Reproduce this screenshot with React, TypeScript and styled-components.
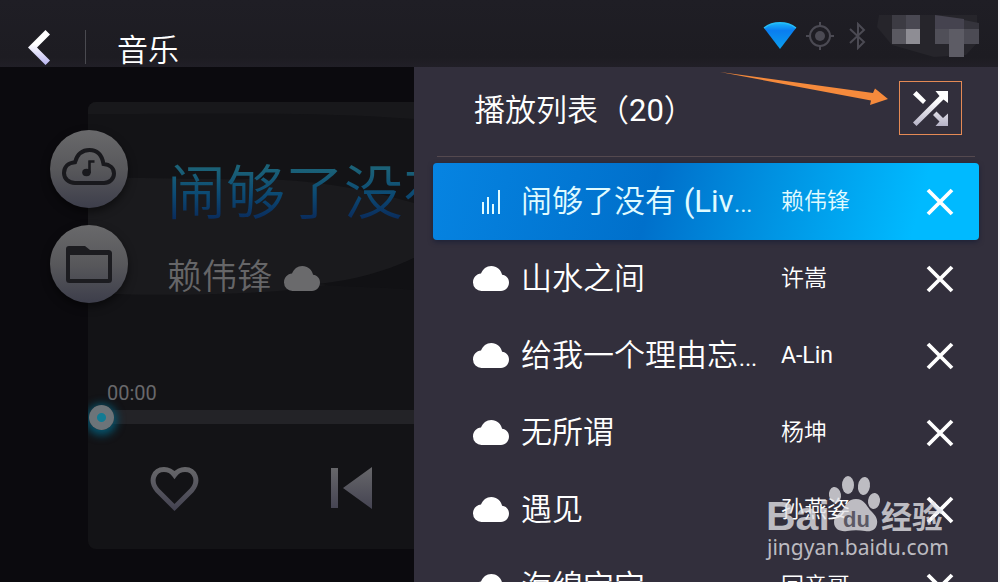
import React from "react";
import styled, { createGlobalStyle, css } from "styled-components";

const GlobalStyle = createGlobalStyle`
  * { box-sizing: border-box; }
  body { margin: 0; background: #f4f4f6; }
  button { background: none; border: 0; padding: 0; margin: 0; color: inherit; font: inherit; cursor: pointer; }
  svg { display: block; flex: none; }
`;

const Screen = styled.div`
  position: relative;
  display: flex;
  flex-direction: column;
  height: 100vh;
  margin-right: 2px;
  overflow: hidden;
  background: #0b0a0e;
  color: #fff;
  font-family: Roboto, "Noto Sans CJK SC", sans-serif;
  font-weight: 350;
`;

const Latin = styled.span`
  font-weight: 400;
`;

const TopBar = styled.header`
  flex: none;
  display: flex;
  justify-content: space-between;
  height: 67px;
  padding: 13px 18px 0 28px;
  background: linear-gradient(#1f1e25, #1d1c22 85%, #211f27);
`;

const TitleGroup = styled.div`
  display: flex;
  align-items: center;
  padding-top: 14px;
`;

const PageTitle = styled.h1`
  margin: 0 0 0 31px;
  padding-top: 8px;
  font-size: 31px;
  font-weight: 350;
  line-height: 40px;
`;

const Separator = styled.span`
  width: 1px;
  height: 34px;
  margin-left: 35px;
  background: #4a4a50;
`;

const StatusIcons = styled.div`
  display: flex;
  align-items: center;
  height: 45px;
`;

const Gap = styled.span<{ $w: number }>`
  width: ${(p) => p.$w}px;
`;

const Content = styled.div`
  flex: 1;
  min-height: 0;
  display: grid;
  grid-template-columns: minmax(0, 414fr) minmax(0, 584fr);
`;

const Stage = styled.main`
  position: relative;
  overflow: hidden;
  padding: 35px 0 33px 88px;
`;

const Card = styled.section`
  position: relative;
  height: 100%;
  border-radius: 8px 0 0 8px;
  overflow: hidden;
  background: #131316;
`;

const Waves = styled.svg`
  position: absolute;
  inset: 0;
`;

const CardBody = styled.div`
  position: relative;
  padding-top: 56px;
`;

const SongTitle = styled.h2`
  margin: 0;
  padding-left: 79px;
  font-size: 59px;
  font-weight: 350;
  line-height: 72px;
  white-space: nowrap;
  color: transparent;
  background: linear-gradient(#1b6177 15%, #0c4a73 50%, #0a2c5c 85%);
  background-clip: text;
  -webkit-background-clip: text;
`;

const Singer = styled.p`
  display: flex;
  align-items: center;
  gap: 12px;
  margin: 26px 0 0;
  padding-left: 79px;
  font-size: 35px;
  line-height: 44px;
  color: #666668;
`;

const Elapsed = styled.div`
  margin-top: 81px;
  padding-left: 19px;
  font-size: 20px;
  font-weight: 400;
  line-height: 24px;
  color: #68686b;
`;

const Seek = styled.input`
  display: block;
  appearance: none;
  width: 100%;
  height: 24px;
  margin: 0;
  padding: 0 0 0 1px;
  background: linear-gradient(#232327, #232327) 16px 5px / 100% 14px no-repeat;
  &::-webkit-slider-thumb {
    appearance: none;
    width: 25px;
    height: 25px;
    border-radius: 50%;
    background: radial-gradient(circle, #127b93 0 4px, #6c7479 5px);
    box-shadow: 0 2px 9px 3px #06556e;
  }
`;

const Transport = styled.div`
  display: flex;
  align-items: flex-start;
  gap: 131px;
  padding: 38px 0 0 62px;
`;

const Sources = styled.nav`
  position: absolute;
  top: 63px;
  left: 50px;
  display: flex;
  flex-direction: column;
  gap: 17px;
`;

const RoundButton = styled.button`
  display: grid;
  place-items: center;
  width: 78px;
  height: 78px;
  border-radius: 50%;
  background: linear-gradient(#69696b, #58585b 50%, #3d3e4b);
  box-shadow: 0 4px 8px rgba(0, 0, 0, 0.5);
`;

const Panel = styled.aside`
  position: relative;
  min-width: 0;
  overflow: hidden;
  padding: 0 19px;
  background: #322f3c;
`;

const PanelHead = styled.div`
  display: flex;
  justify-content: space-between;
  height: 90px;
  margin: 0 4px 6px;
  padding: 14px 13px 0 37px;
  border-bottom: 1px solid #54494f;
`;

const PanelTitle = styled.h2`
  margin: 0;
  font-size: 31px;
  font-weight: 350;
  line-height: 60px;
`;

const ShuffleButton = styled.button`
  display: grid;
  place-items: center;
  width: 63px;
  height: 54px;
  border: 1px solid #e58a55;
`;

const Pointer = styled.svg`
  position: absolute;
  top: 4px;
  right: 110px;
`;

const List = styled.ul`
  list-style: none;
  margin: 0;
  padding: 0;
`;

const Row = styled.li<{ $active?: boolean }>`
  display: flex;
  align-items: center;
  height: 77px;
  padding: 0 25px 0 40px;
  border-radius: 4px;
  ${(p) =>
    p.$active &&
    css`
      color: #e0fbff;
      background: linear-gradient(105deg, #0684e2, #0070cb 40%, #0090e0 60%, #00baff 88%);
      box-shadow: 0 2px 5px rgba(10, 20, 50, 0.5);
    `}
`;

const IconSlot = styled.span`
  flex: none;
  width: 36px;
  display: grid;
  place-items: center;
`;

const Track = styled.span`
  flex: 238;
  min-width: 0;
  margin: 0 22px 0 12px;
  overflow: hidden;
  text-overflow: ellipsis;
  white-space: nowrap;
  font-size: 31px;
  line-height: 44px;
`;

const Artist = styled.span`
  flex: 145;
  min-width: 0;
  font-size: 23px;
  line-height: 32px;
  white-space: nowrap;
`;

const Watermark = styled.div`
  position: absolute;
  right: 53px;
  bottom: 22px;
  width: 178px;
  color: rgba(228, 228, 232, 0.78);
  pointer-events: none;
`;

const WatermarkUrl = styled.span`
  display: block;
  font-family: "Noto Sans", sans-serif;
  font-size: 21px;
  font-weight: 400;
  line-height: 26px;
  white-space: nowrap;
`;

const Cloud = ({ color = "#fff" }: { color?: string }) => (
  <svg width="36" height="25" viewBox="0 0 36 25" fill={color}>
    <path d="M8.5 25A8.5 8.5 0 0 1 0 16.500C0 11.500 3.500 8 8 7.600 9.800 3 13.500 0 18.300 0c5.400 0 9.700 3.700 10.800 8.700C33 9 36 12.200 36 16.500 36 21.300 32.500 25 28 25z" />
  </svg>
);

const Bars = () => (
  <svg width="18" height="24" viewBox="0 0 18 24" fill="currentColor">
    <path d="M0 12h2v12H0zM5 7h2v17H5zM10 14h2v10h-2zM16 0h2v24h-2z" />
  </svg>
);

const Cross = () => (
  <svg width="28" height="28" viewBox="0 0 28 28" stroke="#fff" strokeWidth="3.8">
    <path d="M2 2l24 24M26 2L2 26" />
  </svg>
);

const BackIcon = () => (
  <svg width="22" height="35" viewBox="0 0 22 35">
    <defs>
      <linearGradient id="back" x1="0" y1="0" x2="0" y2="1">
        <stop offset="0.4" stopColor="#fff" />
        <stop offset="1" stopColor="#b9b5f0" />
      </linearGradient>
    </defs>
    <path d="M17.500 0L22 4.500 9 17.500 22 30.500 17.500 35 0 17.500z" fill="url(#back)" />
  </svg>
);

const WifiIcon = () => (
  <svg width="34" height="28" viewBox="0 0 34 28">
    <defs>
      <linearGradient id="wifi" x1="0" y1="0" x2="0" y2="1">
        <stop offset="0" stopColor="#1bb6f8" />
        <stop offset="0.3" stopColor="#0a7df0" />
        <stop offset="1" stopColor="#0aa0ee" />
      </linearGradient>
    </defs>
    <path d="M1 6C10-1 24-1 33 6L17 27z" fill="url(#wifi)" />
    <path d="M1 6C10-1 24-1 33 6" fill="none" stroke="#25bdf7" strokeWidth="1.500" />
  </svg>
);

const GpsIcon = () => (
  <svg width="28" height="28" viewBox="0 0 28 28" fill="none" stroke="#4b4a53" strokeWidth="2">
    <circle cx="14" cy="14" r="10" />
    <circle cx="14" cy="14" r="5" fill="#4b4a53" stroke="none" />
    <path d="M14 0v5M14 23v5M0 14h5M23 14h5" />
  </svg>
);

const BluetoothIcon = () => (
  <svg width="17" height="28" viewBox="0 0 17 28" fill="none" stroke="#4b4a53" strokeWidth="2">
    <path d="M1 7l14 13-6 6V2l6 6L1 21" />
  </svg>
);

const Mosaic = () => (
  <svg width="103" height="45" viewBox="0 0 103 45">
    <path d="M2 2h98v28L89 42l-32 2-42-12L0 14z" fill="#26252b" />
    <path d="M15 2h14v14H15z" fill="#3c3b43" />
    <path d="M29 2h14v14H29z" fill="#494852" />
    <path d="M15 16h14v15H15z" fill="#5a5961" />
    <path d="M29 16h14v15H29z" fill="#8e8d94" />
    <path d="M58 2l29 4v10H58z" fill="#45434f" />
    <path d="M58 16h14v15H58z" fill="#504f58" />
    <path d="M72 16h15v28H72z" fill="#5d5c65" />
    <path d="M87 7l15 3v6H87z" fill="#35343c" />
    <path d="M87 16h15v15H87z" fill="#4c4b54" />
  </svg>
);

const ShuffleIcon = () => (
  <svg width="36" height="36" viewBox="0 0 36 36">
    <defs>
      <linearGradient id="shuffle" x1="0" y1="0" x2="0" y2="36" gradientUnits="userSpaceOnUse">
        <stop offset="0.300" stopColor="#fff" />
        <stop offset="1" stopColor="#b5b2c6" />
      </linearGradient>
    </defs>
    <g fill="url(#shuffle)">
      <path d="M0 32.500L26.500 6 22.500 1H35v12l-4.500-3.500L3.500 36z" />
      <path d="M3.500 1L13 10.500 10 14 0 4.500z" />
      <path d="M23.500 21.500l6.500 6.500 5-4.500V36H22.500l4-4.500-6.500-6.500z" />
    </g>
  </svg>
);

const CloudMusicIcon = () => (
  <svg width="54" height="42" viewBox="0 0 54 42" fill="none" stroke="#19191d" strokeWidth="4">
    <path d="M13 35C6.500 35 2 30.500 2 25c0-6 4.300-10.300 11-10.800C15 7 20 2 27.500 2S40 7 41.500 16C48 16.500 52 20.300 52 25.500 52 31 47.500 35 42 35z" />
    <ellipse cx="24.500" cy="24.500" rx="4.300" ry="3.700" fill="#19191d" stroke="none" />
    <path d="M27.500 25V12.500M26.500 13.500h6" strokeWidth="2.600" />
  </svg>
);

const FolderIcon = () => (
  <svg width="46" height="37" viewBox="0 0 46 37">
    <path
      fillRule="evenodd"
      fill="#1c1c20"
      d="M3 0h16l5 4h18.500Q46 4 46 7.500V33.500Q46 37 42.500 37H3.500Q0 37 0 33.500V3Q0 0 3 0zM4 9v24h38V9z"
    />
  </svg>
);

const HeartIcon = () => (
  <svg width="50" height="45" viewBox="0 0 50 45">
    <defs>
      <linearGradient id="metal" x1="0" y1="0" x2="0" y2="45" gradientUnits="userSpaceOnUse">
        <stop offset="0" stopColor="#67676a" />
        <stop offset="1" stopColor="#424150" />
      </linearGradient>
    </defs>
    <path
      d="M24.500 40.500L7.500 23.500C-1 14 4 2.500 14 2.500c5 0 8 2 10.500 5.500C27 4.500 30 2.500 35 2.500c10 0 15 11.500 6.500 21z"
      fill="none"
      stroke="url(#metal)"
      strokeWidth="5"
    />
  </svg>
);

const PreviousIcon = () => (
  <svg width="41" height="42" viewBox="0 0 41 42">
    <path d="M0 1h7v40H0zM41 0v42L12 21z" fill="url(#metal)" />
  </svg>
);

const BaiduLogo = () => (
  <svg width="178" height="60" viewBox="0 0 178 60" fill="currentColor" role="img" aria-label="Baidu 经验">
    <text x="-1" y="56" fontSize="41" fontWeight="700" fontFamily='"Liberation Sans", sans-serif'>
      Bai
    </text>
    <ellipse cx="68" cy="21" rx="6" ry="8" transform="rotate(-10 68 21)" />
    <ellipse cx="81" cy="11" rx="6" ry="9" />
    <ellipse cx="97" cy="12" rx="6" ry="9" transform="rotate(8 97 12)" />
    <ellipse cx="107" cy="27" rx="6" ry="8" transform="rotate(8 107 27)" />
    <path d="M89 25c8 0 10 6 14 11 5 5 8 8 7 14-1 6-6 8-12 7-6-1-12-1-18 0-7 1-13-2-13-9 0-6 5-8 9-13 3-4 5-10 13-10z" />
    <text x="76" y="53" fontSize="22" fontWeight="700" fontFamily='"Liberation Sans", sans-serif' fill="#5b5964">
      du
    </text>
    <text x="114" y="54" fontSize="31" fontWeight="700" fontFamily='"Noto Sans CJK SC", sans-serif'>
      经验
    </text>
  </svg>
);

type Song = { title: string; suffix?: string; artist: string; playing?: boolean };

const tracks: Song[] = [
  { title: "闹够了没有", suffix: " (Live)", artist: "赖伟锋", playing: true },
  { title: "山水之间", artist: "许嵩" },
  { title: "给我一个理由忘记", artist: "A-Lin" },
  { title: "无所谓", artist: "杨坤" },
  { title: "遇见", artist: "孙燕姿" },
  { title: "海绵宝宝", artist: "回音哥" },
];

const isLatin = (text: string) => /^[\x20-\x7e]+$/.test(text);

export default function App() {
  return (
    <Screen>
      <GlobalStyle />
      <TopBar>
        <TitleGroup>
          <button aria-label="返回"><BackIcon /></button>
          <Separator />
          <PageTitle>音乐</PageTitle>
        </TitleGroup>
        <StatusIcons>
          <WifiIcon />
          <Gap $w={9} />
          <GpsIcon />
          <Gap $w={15} />
          <BluetoothIcon />
          <Gap $w={11} />
          <Mosaic />
        </StatusIcons>
      </TopBar>
      <Content>
        <Stage>
          <Card>
            <Waves width="100%" height="447" viewBox="0 0 326 447" preserveAspectRatio="xMinYMin slice">
              <path d="M0 0h326v17C220 9 100 12 0 12z" fill="#18181b" />
              <path d="M0 76C60 75 110 78 160 77c60 0 110 8 166 24v55c-40 20-90 30-150 34-60 3-120 4-176 1z" fill="#1a1a1d" />
              <path d="M326 156c-30 14-60 22-96 26 30 4 60 2 96 6z" fill="#111114" />
            </Waves>
            <CardBody>
              <SongTitle>闹够了没有</SongTitle>
              <Singer>赖伟锋 <Cloud color="#6a6a6c" /></Singer>
              <Elapsed>00:00</Elapsed>
              <Seek type="range" min="0" max="100" defaultValue="0" aria-label="播放进度" />
              <Transport>
                <button aria-label="收藏"><HeartIcon /></button>
                <button aria-label="上一首"><PreviousIcon /></button>
              </Transport>
            </CardBody>
          </Card>
          <Sources>
            <RoundButton aria-label="云音乐"><CloudMusicIcon /></RoundButton>
            <RoundButton aria-label="本地音乐"><FolderIcon /></RoundButton>
          </Sources>
        </Stage>
        <Panel>
          <PanelHead>
            <PanelTitle>播放列表（<Latin>20</Latin>）</PanelTitle>
            <ShuffleButton aria-label="随机播放"><ShuffleIcon /></ShuffleButton>
          </PanelHead>
          <Pointer width="168" height="36" viewBox="0 0 168 36">
            <path d="M0 1L153 22l2-4.500L168 28l-18 6 1-4.500z" fill="#f58a3c" />
          </Pointer>
          <List>
            {tracks.map((t) => (
              <Row key={t.title} $active={t.playing}>
                <IconSlot>{t.playing ? <Bars /> : <Cloud />}</IconSlot>
                <Track>
                  {t.title}
                  {t.suffix && <Latin>{t.suffix}</Latin>}
                </Track>
                <Artist>{isLatin(t.artist) ? <Latin>{t.artist}</Latin> : t.artist}</Artist>
                <button aria-label={`删除 ${t.title}`}><Cross /></button>
              </Row>
            ))}
          </List>
        </Panel>
      </Content>
      <Watermark>
        <BaiduLogo />
        <WatermarkUrl>jingyan.baidu.com</WatermarkUrl>
      </Watermark>
    </Screen>
  );
}
